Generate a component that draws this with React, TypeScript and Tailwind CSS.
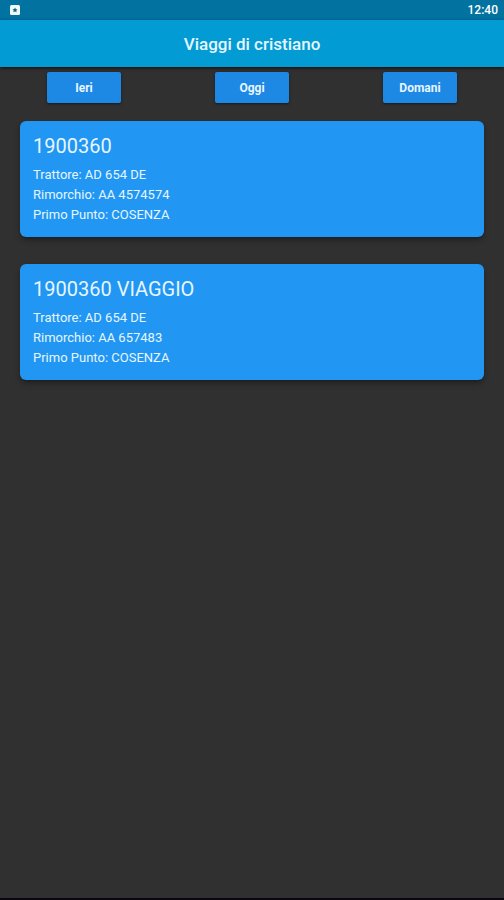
interface Trip {
  id: number;
  title: string;
  tractor: string;
  trailer: string;
  firstStop: string;
}

const days = ["Ieri", "Oggi", "Domani"];

const trips: Trip[] = [
  { id: 1, title: "1900360", tractor: "AD 654 DE", trailer: "AA 4574574", firstStop: "COSENZA" },
  { id: 2, title: "1900360 VIAGGIO", tractor: "AD 654 DE", trailer: "AA 657483", firstStop: "COSENZA" },
];

function StatusBar() {
  return (
    <div className="flex h-5 items-center justify-between bg-[#0272a0] pl-2.5 pr-1.5 text-white">
      <svg className="h-2.5 w-2.5" viewBox="0 0 10 10" aria-hidden="true">
        <rect width="10" height="10" rx="1.5" fill="#f1fbff" />
        <path d="M5 2.5 5.8 4.1 7.5 4.4 6.3 5.6 6.6 7.3 5 6.5 3.4 7.3 3.7 5.6 2.5 4.4 4.2 4.1Z" fill="#1c6675" />
      </svg>
      <span className="text-[12px] leading-5 font-medium">12:40</span>
    </div>
  );
}

function TripCard({ trip }: { trip: Trip }) {
  return (
    <article className="rounded-md bg-[#2196f3] px-[13px] py-3 shadow-md shadow-black/30">
      <h2 className="mb-1.5 text-[20px] leading-[26px]">{trip.title}</h2>
      <div className="text-[13px] leading-5">
        <p>Trattore: {trip.tractor}</p>
        <p>Rimorchio: {trip.trailer}</p>
        <p>Primo Punto: {trip.firstStop}</p>
      </div>
    </article>
  );
}

export default function App() {
  return (
    <div className="flex min-h-screen flex-col border-b-2 border-[#0b0610] bg-[#303030] font-[Roboto,sans-serif] text-[#e6f6ff]">
      <StatusBar />
      <header className="flex h-[47px] items-center justify-center bg-[#029bd3] shadow-sm shadow-black/60">
        <h1 className="text-[17px] leading-6 font-medium">Viaggi di cristiano</h1>
      </header>

      <nav className="flex justify-around pt-[5px]">
        {days.map((day) => (
          <button
            key={day}
            type="button"
            className="h-[31px] w-[74px] rounded-xs bg-[#1e88e5] pt-px text-[12px] font-bold shadow-sm shadow-black/40"
          >
            {day}
          </button>
        ))}
      </nav>

      <main className="flex flex-col gap-[27px] px-5 pt-[18px]">
        {trips.map((trip) => (
          <TripCard key={trip.id} trip={trip} />
        ))}
      </main>
    </div>
  );
}
